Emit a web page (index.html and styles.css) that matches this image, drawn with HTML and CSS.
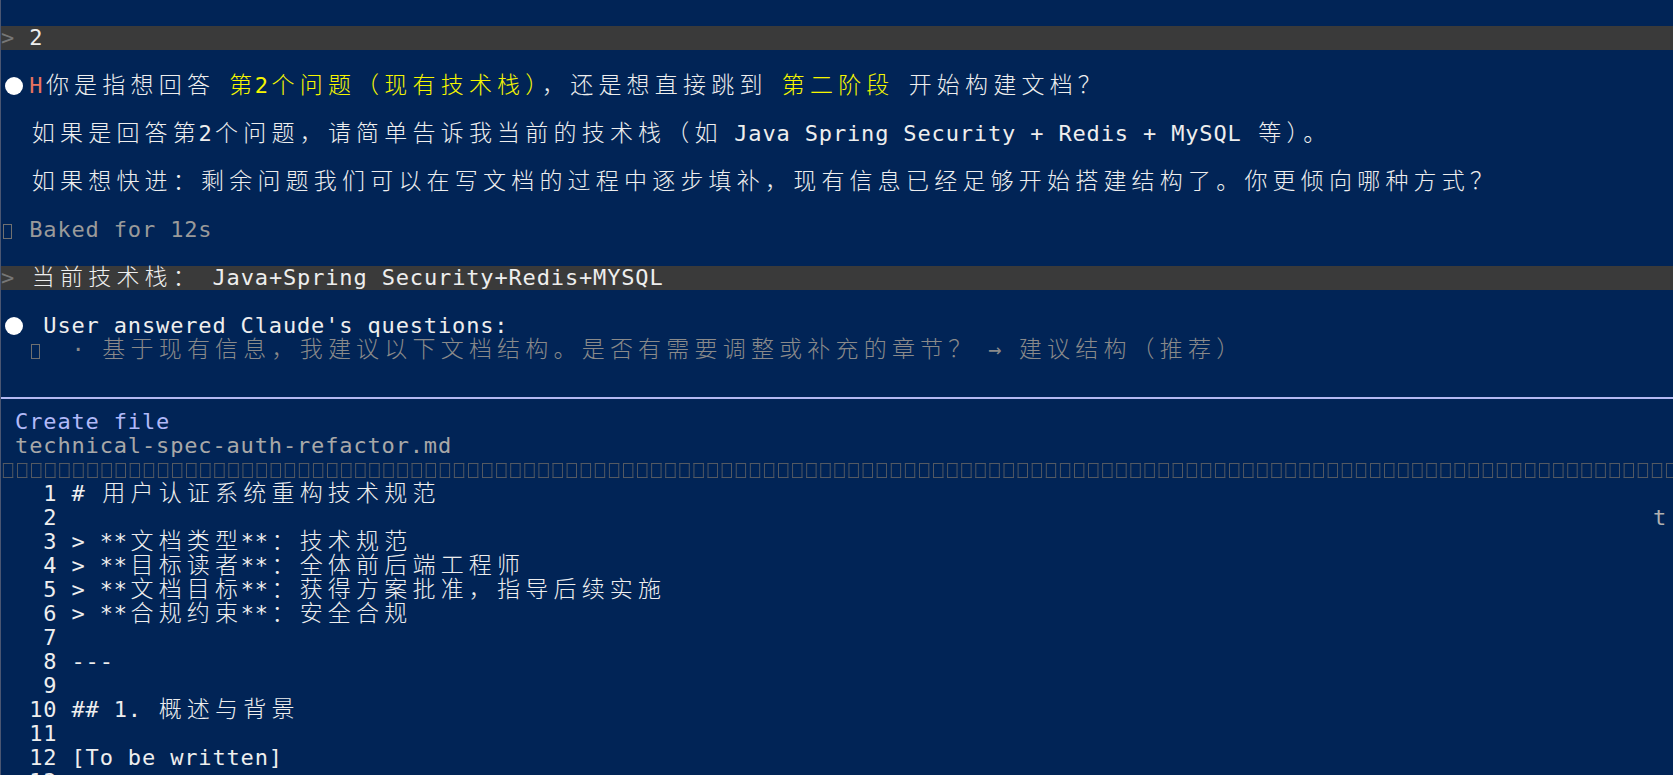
FILE: index.html
```html
<!DOCTYPE html>
<html lang="zh-CN">
<head>
<meta charset="utf-8">
<title>Terminal</title>
<link rel="stylesheet" href="styles.css">
</head>
<body>
<div class="term">
  <div class="row"></div>
  <div class="row bar"><span class="pr">&gt;</span> 2</div>
  <div class="row"></div>
  <div class="row"><span class="dot"></span><span class="red">H</span><span class="c">你是指想回答</span> <span class="yel"><span class="c">第</span>2<span class="c">个问题（现有技术栈）</span></span><span class="c">，还是想直接跳到</span> <span class="yel"><span class="c">第二阶段</span></span> <span class="c">开始构建文档？</span></div>
  <div class="row"></div>
  <div class="row">  <span class="c">如果是回答第</span>2<span class="c">个问题，请简单告诉我当前的技术栈（如</span> Java Spring Security + Redis + MySQL <span class="c">等）。</span></div>
  <div class="row"></div>
  <div class="row">  <span class="c">如果想快进：剩余问题我们可以在写文档的过程中逐步填补，现有信息已经足够开始搭建结构了。你更倾向哪种方式？</span></div>
  <div class="row"></div>
  <div class="row dim"><span class="tofu"></span> Baked for 12s</div>
  <div class="row"></div>
  <div class="row bar"><span class="pr">&gt;</span> <span class="c">当前技术栈：</span> Java+Spring Security+Redis+MYSQL</div>
  <div class="row"></div>
  <div class="row"><span class="dot"></span> User answered Claude's questions:</div>
  <div class="row dim2">  <span class="tofu"></span>  · <span class="c">基于现有信息，我建议以下文档结构。是否有需要调整或补充的章节？</span> → <span class="c">建议结构（推荐）</span></div>
  <div class="row"></div>
  <div class="sep"></div>
  <div class="row lav"> Create file</div>
  <div class="row file"> technical-spec-auth-refactor.md</div>
  <div class="tofu-row"></div>
  <div class="row">   1 # <span class="c">用户认证系统重构技术规范</span></div>
  <div class="row split"><span>   2</span><span class="stray">t</span></div>
  <div class="row">   3 &gt; **<span class="c">文档类型</span>**<span class="c">：技术规范</span></div>
  <div class="row">   4 &gt; **<span class="c">目标读者</span>**<span class="c">：全体前后端工程师</span></div>
  <div class="row">   5 &gt; **<span class="c">文档目标</span>**<span class="c">：获得方案批准，指导后续实施</span></div>
  <div class="row">   6 &gt; **<span class="c">合规约束</span>**<span class="c">：安全合规</span></div>
  <div class="row">   7</div>
  <div class="row">   8 ---</div>
  <div class="row">   9</div>
  <div class="row">  10 ## 1. <span class="c">概述与背景</span></div>
  <div class="row">  11</div>
  <div class="row">  12 [To be written]</div>
  <div class="row">  13</div>
</div>
</body>
</html>
```

FILE: styles.css
```css
html, body {
  margin: 0;
  background: #012456;
}

.term {
  --w: 14.1px;
  width: 1673px;
  height: 775px;
  overflow: hidden;
  box-sizing: border-box;
  border-left: 1px solid #4a5672;
  padding-top: 2px;
  background: #012456;
  color: #eeeeee;
  font-family: "DejaVu Sans Mono", "Liberation Mono", monospace;
  font-size: 22px;
  letter-spacing: 0.85px;
}

.row {
  height: 24px;
  line-height: 24px;
  white-space: pre;
}

.c {
  font-family: "Noto Sans CJK SC", "Noto Sans CJK JP", sans-serif;
  font-size: 23px;
  font-weight: 300;
  line-height: 16px;
  letter-spacing: 5.2px;
  padding-left: 2.6px;
  margin-right: -2.6px;
}

.bar {
  background: #3a3a3a;
}

.pr {
  color: #767676;
}

.red {
  color: #e8735f;
}

.yel {
  color: #f6f600;
}

.dim {
  color: #9a9a9a;
}

.dim2 {
  color: #8a8a8a;
}

.lav {
  color: #b1b9f9;
}

.file {
  color: #a8a8a8;
}

.dot {
  display: inline-block;
  width: 18px;
  height: 18px;
  border-radius: 50%;
  background: #ffffff;
  margin-left: 4px;
  margin-right: calc(var(--w) * 2 - 22px);
  vertical-align: -2px;
}

.tofu {
  display: inline-block;
  box-sizing: border-box;
  width: 9px;
  height: 15px;
  border: 1px solid #707070;
  margin-left: 2px;
  margin-right: calc(var(--w) - 11px);
  vertical-align: -2px;
}

.sep {
  height: 24px;
  display: flex;
  align-items: center;
}

.sep::before {
  content: "";
  flex: 1;
  height: 2px;
  background: #b4b9f2;
}

.tofu-row {
  height: 24px;
  background-image:
    linear-gradient(90deg, transparent 2px, #555a62 2px 12px, transparent 12px),
    linear-gradient(90deg, transparent 2px, #555a62 2px 12px, transparent 12px),
    linear-gradient(90deg, transparent 2px, #555a62 2px 3px, transparent 3px 11px, #555a62 11px 12px, transparent 12px);
  background-size: var(--w) 1px, var(--w) 1px, var(--w) 15px;
  background-position: 0 5px, 0 19px, 0 5px;
  background-repeat: repeat-x;
}

.split {
  display: flex;
  justify-content: space-between;
  padding-right: 6px;
}

.stray {
  color: #b0b0b0;
}
```
